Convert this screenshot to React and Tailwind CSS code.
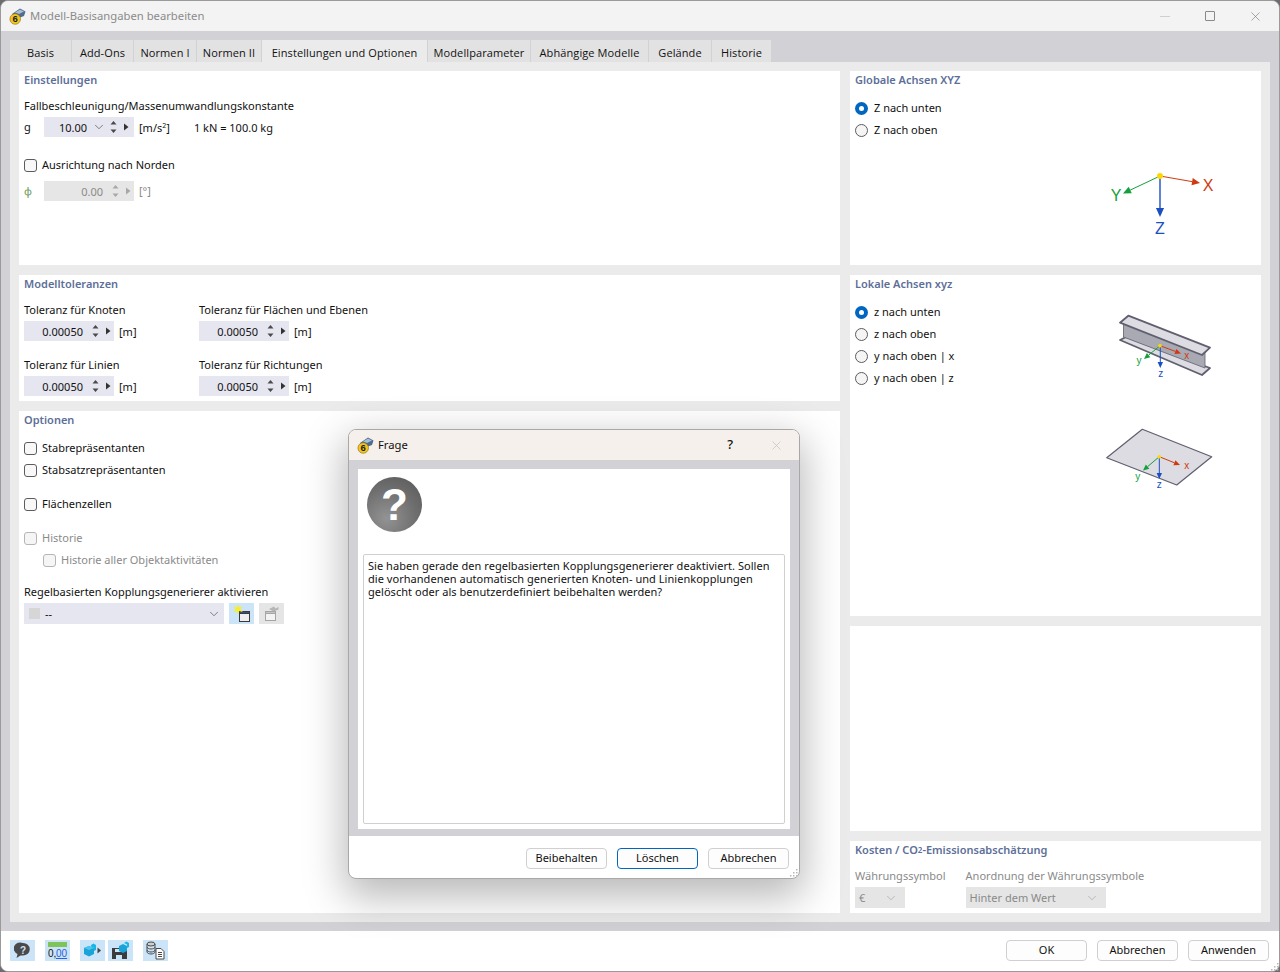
import { ChevronDown, X } from "lucide-react";

const TABS = [
  { label: "Basis", w: "w-[62px]" },
  { label: "Add-Ons", w: "w-[62px]" },
  { label: "Normen I", w: "w-[63px]" },
  { label: "Normen II", w: "w-[65px]" },
  { label: "Einstellungen und Optionen", w: "w-[166px]", active: true },
  { label: "Modellparameter", w: "w-[103px]" },
  { label: "Abhängige Modelle", w: "w-[118px]" },
  { label: "Gelände", w: "w-[63px]" },
  { label: "Historie", w: "w-[60px]" },
];

function AppIcon() {
  return (
    <svg width="17" height="17" viewBox="0 0 17 17" className="shrink-0">
      <path d="M3 6l8-5.5 5.5 3-1.5 4.5-8 3z" fill="#4f6b8f" />
      <path d="M6 4.5l5-3 4 2-5 2.5z" fill="#a9bdd3" />
      <circle cx="6.2" cy="11" r="5.3" fill="#f2c521" stroke="#8a6d10" strokeWidth="0.6" />
      <text x="6.2" y="14.4" textAnchor="middle" fontSize="9.5" fontWeight="700" fill="#1c1c1c" fontFamily="Liberation Sans, sans-serif">6</text>
    </svg>
  );
}

function SpinArrows({ disabled }) {
  const c = disabled ? "#a8a8a8" : "#4a4a4a";
  return (
    <svg width="26" height="14" viewBox="0 0 26 14" className="shrink-0">
      <path d="M7.5 1L4.5 4.5h6zM7.5 13L4.5 9.5h6z" fill={c} />
      <path d="M18 3.5l4.5 3.5-4.5 3.5z" fill={disabled ? "#a8a8a8" : "#333"} />
    </svg>
  );
}

function Spinner({ value, dropdown, disabled }) {
  return (
    <div className={`flex items-center w-[90px] h-5 ${disabled ? "bg-[#e6e6e6] text-[#8a8a8a]" : "bg-[#e6e6f0]"}`}>
      <span className={`text-right pt-[2px] ${dropdown ? "w-[43px]" : "w-[59px]"}`}>{value}</span>
      {dropdown && <ChevronDown size={14} strokeWidth={1.25} className="ml-[5px] shrink-0 text-[#555]" />}
      {!dropdown && <span className="w-[5px]" />}
      <SpinArrows disabled={disabled} />
    </div>
  );
}

function Check({ label, disabled, className = "" }) {
  return (
    <div className={`flex items-center h-[18px] ${className}`}>
      <span className={`w-[13px] h-[13px] rounded-[3px] border shrink-0 ${disabled ? "border-[#b5b5b5] bg-[#f5f5f5]" : "border-[#5c5c5c] bg-[#f8f8f8]"}`} />
      <span className={`ml-[5px] ${disabled ? "text-[#8a8a8a]" : ""}`}>{label}</span>
    </div>
  );
}

function Radio({ label, checked }) {
  return (
    <div className="flex items-center h-[22px]">
      {checked ? (
        <span className="w-[13px] h-[13px] rounded-full bg-[#0067c0] flex items-center justify-center shrink-0">
          <span className="w-[5px] h-[5px] rounded-full bg-white" />
        </span>
      ) : (
        <span className="w-[13px] h-[13px] rounded-full border border-[#5c5c5c] bg-[#f5f5f5] shrink-0" />
      )}
      <span className="ml-[6px]">{label}</span>
    </div>
  );
}

function Title({ children }) {
  return <div className="h-[18px] flex items-center font-semibold text-[#5d6f99]">{children}</div>;
}

function Panel({ className = "", children }) {
  return <section className={`bg-white px-[5px] ${className}`}>{children}</section>;
}

function Tolerance({ label, className = "" }) {
  return (
    <div className={className}>
      <div className="h-[18px] flex items-center">{label}</div>
      <div className="mt-[2px] flex items-center">
        <Spinner value="0.00050" />
        <span className="ml-[5px] pt-[2px]">[m]</span>
      </div>
    </div>
  );
}

function Btn({ children, primary }) {
  return (
    <button className={`w-[81px] h-[21px] pt-[1px] rounded-[4px] border bg-[#fdfdfd] flex items-center justify-center ${primary ? "border-[#0067c0]" : "border-[#d0d0d0]"}`}>
      {children}
    </button>
  );
}

function ToolBtn({ children }) {
  return <div className="w-[25px] h-[21px] bg-[#cce4f7] flex items-center justify-center shrink-0">{children}</div>;
}

function Grip({ className }) {
  return (
    <svg width="9" height="9" viewBox="0 0 9 9" className={className}>
      <path d="M7 1h1.5v1.5H7zM4 4h1.5v1.5H4zM7 4h1.5v1.5H7zM1 7h1.5v1.5H1zM4 7h1.5v1.5H4zM7 7h1.5v1.5H7z" fill="#b9b9b9" />
    </svg>
  );
}

function Arrow({ x1, y1, x2, y2, color, head = 6, width = 1 }) {
  const a = Math.atan2(y2 - y1, x2 - x1);
  const px = Math.sin(a) * head * 0.45;
  const py = Math.cos(a) * head * 0.45;
  const bx = x2 - Math.cos(a) * head;
  const by = y2 - Math.sin(a) * head;
  return (
    <g>
      <line x1={x1} y1={y1} x2={bx} y2={by} stroke={color} strokeWidth={width} />
      <path d={`M${x2} ${y2}L${bx + px} ${by - py}L${bx - px} ${by + py}z`} fill={color} />
    </g>
  );
}

function GlobalAxes() {
  return (
    <svg width="120" height="70" viewBox="0 0 120 70" className="shrink-0 mt-[81px] mr-[36px]" fontFamily="Liberation Sans, sans-serif" fontSize="16">
      <Arrow x1={60} y1={6} x2={100} y2={13} color="#cf3a10" head={8} />
      <Arrow x1={60} y1={6} x2={23} y2={23.5} color="#14a03c" head={8} />
      <Arrow x1={60} y1={6} x2={60} y2={47} color="#1a4fc4" head={9} width={1.4} />
      <circle cx="60" cy="6" r="3" fill="#ffd800" />
      <text x="108" y="20.5" textAnchor="middle" fill="#cf3a10">X</text>
      <text x="16" y="31" textAnchor="middle" fill="#14a03c">Y</text>
      <text x="60" y="63.5" textAnchor="middle" fill="#1a4fc4">Z</text>
    </svg>
  );
}

function LocalAxes() {
  return (
    <svg width="120" height="185" viewBox="0 0 120 185" className="shrink-0 mt-[17px] mr-[36px]" fontFamily="Liberation Sans, sans-serif" fontSize="10">
      {/* I-Profil */}
      <path d="M20 30L26 27L110 58L102 65z" fill="#dcdce2" stroke="#5f5f6f" strokeWidth="1.8" strokeLinejoin="round" />
      <path d="M23.5 11L23.5 27L105 58L105 42z" fill="#a9a9b4" stroke="#5f5f6f" strokeWidth="0.8" />
      <path d="M28.3 5.7L110 37.7L102 45L20 12.7z" fill="#dcdce2" stroke="#5f5f6f" strokeWidth="1.8" strokeLinejoin="round" />
      <Arrow x1={60} y1={35.7} x2={81} y2={43.5} color="#cf3a10" head={6} />
      <Arrow x1={60} y1={35.7} x2={44} y2={49} color="#14a03c" head={6} />
      <Arrow x1={60.3} y1={35.7} x2={60.3} y2={58} color="#1a4fc4" head={6} />
      <circle cx="60" cy="35.7" r="1.8" fill="#ffd800" />
      <text x="86.7" y="49" textAnchor="middle" fill="#cf3a10">x</text>
      <text x="39" y="54" textAnchor="middle" fill="#14a03c">y</text>
      <text x="60.7" y="67" textAnchor="middle" fill="#1a4fc4">z</text>
      {/* Platte */}
      <path d="M42.3 119.3L111.7 146.7L76.7 175L6.7 147.7z" fill="#dcdce2" stroke="#5f5f6f" strokeWidth="1.2" strokeLinejoin="round" />
      <Arrow x1={59.3} y1={146.7} x2={80} y2={155} color="#cf3a10" head={6} />
      <Arrow x1={59.3} y1={146.7} x2={43} y2={160.5} color="#14a03c" head={6} />
      <Arrow x1={59.3} y1={146.7} x2={59.3} y2={169} color="#1a4fc4" head={6} />
      <circle cx="59.3" cy="146.7" r="1.8" fill="#ffd800" />
      <text x="86.7" y="159" textAnchor="middle" fill="#cf3a10">x</text>
      <text x="37.7" y="170" textAnchor="middle" fill="#14a03c">y</text>
      <text x="59.3" y="177.5" textAnchor="middle" fill="#1a4fc4">z</text>
    </svg>
  );
}

function DisabledSelect({ value, className }) {
  return (
    <div className={`h-[21px] bg-[#e5e5e5] text-[#8a8a8a] flex items-center justify-between pl-[4px] pr-[7px] ${className}`}>
      <span className="pt-[1px]">{value}</span>
      <ChevronDown size={14} strokeWidth={1} className="text-[#999]" />
    </div>
  );
}

function QuestionDialog() {
  return (
    <div className="absolute left-[348px] top-[429px] w-[452px] h-[450px] rounded-lg border border-[#a8a8a8] bg-white flex flex-col overflow-hidden shadow-[0_14px_40px_4px_rgba(0,0,0,0.28)]">
      <div className="h-[30px] shrink-0 bg-[#f5f0eb] flex items-center pl-[8px]">
        <AppIcon />
        <span className="ml-[4px] text-[11.25px]">Frage</span>
        <span className="ml-auto text-[13px] font-medium">?</span>
        <X size={15} strokeWidth={1} className="ml-[36px] mr-[15px] text-[#bbbbbb]" />
      </div>
      <div className="h-[376px] shrink-0 bg-[#d2d2d6] p-[9px] pb-[7px]">
        <div className="bg-white h-full px-[5px] pb-[5px] flex flex-col">
          <div className="h-[85px] shrink-0 pt-[8px] pl-[4px]">
            <div className="w-[55px] h-[55px] rounded-full bg-[radial-gradient(circle_at_35%_75%,#939393_0%,#6e6e6e_55%,#565656_100%)] flex items-center justify-center text-white text-[44px] font-bold leading-none font-['Liberation_Sans',sans-serif]">
              ?
            </div>
          </div>
          <div className="flex-1 border border-[#d0d0d0] rounded-[2px] px-[4px] pt-[4px] leading-[13px] text-[#111] tracking-[0.04px]">
            Sie haben gerade den regelbasierten Kopplungsgenerierer deaktiviert. Sollen<br />
            die vorhandenen automatisch generierten Knoten- und Linienkopplungen<br />
            gelöscht oder als benutzerdefiniert beibehalten werden?
          </div>
        </div>
      </div>
      <div className="flex-1 flex items-center justify-end gap-[10px] pr-[10px] pt-[2px]">
        <Btn>Beibehalten</Btn>
        <Btn primary>Löschen</Btn>
        <Btn>Abbrechen</Btn>
      </div>
      <Grip className="absolute right-[1px] bottom-[1px]" />
    </div>
  );
}

export default function App() {
  return (
    <div className="relative w-[1280px] h-[972px] overflow-hidden bg-[#6b6b70] text-[11px] text-[#111] font-['Noto_Sans','Open_Sans',sans-serif]">
      <div className="h-full flex flex-col rounded-lg border border-[#9a9a9a] overflow-hidden bg-[#d2d2d6]">
        {/* Titelleiste */}
        <header className="h-[30px] shrink-0 bg-[#f3f3f3] flex items-center pl-[8px]">
          <AppIcon />
          <span className="ml-[4px] pt-[1px] text-[11.25px] text-[#8b8b8b]">Modell-Basisangaben bearbeiten</span>
          <span className="ml-auto w-[10px] h-[1px] bg-[#cfcfcf]" />
          <span className="ml-[35px] w-[10px] h-[10px] rounded-[1px] border border-[#888]" />
          <X size={15} strokeWidth={1} className="ml-[33px] mr-[16px] text-[#777]" />
        </header>

        {/* Karteireiter */}
        <nav className="mt-[9px] ml-[9px] h-[22px] shrink-0 flex tracking-[0.1px] font-['Open_Sans',sans-serif]">
          {TABS.map((t) => (
            <div key={t.label} className={`${t.w} flex items-center justify-center pt-[4px] border-r border-[#d2d2d6] ${t.active ? "bg-[#ebebeb]" : "bg-[#e2e2e3]"}`}>
              {t.label}
            </div>
          ))}
        </nav>

        {/* Inhalt */}
        <main className="mx-[9px] h-[860px] shrink-0 bg-[#ebebeb] p-[9px] flex gap-[10px]">
          <div className="w-[821px] shrink-0 flex flex-col gap-[10px]">
            <Panel className="h-[194px] shrink-0">
              <Title>Einstellungen</Title>
              <div className="mt-[8px] h-[18px] flex items-center">Fallbeschleunigung/Massenumwandlungskonstante</div>
              <div className="mt-[2px] flex items-center">
                <span className="w-[20px]">g</span>
                <Spinner value="10.00" dropdown />
                <span className="ml-[5px] pt-[2px]">[m/s<sup className="text-[7px]">2</sup>]</span>
                <span className="ml-[24px] pt-[2px]">1 kN = 100.0 kg</span>
              </div>
              <Check label="Ausrichtung nach Norden" className="mt-[19px]" />
              <div className="mt-[7px] flex items-center">
                <span className="w-[20px] text-[#6d9a5a]">ϕ</span>
                <Spinner value="0.00" disabled />
                <span className="ml-[5px] text-[#8a8a8a]">[°]</span>
              </div>
            </Panel>

            <Panel className="h-[126px] shrink-0">
              <Title>Modelltoleranzen</Title>
              <div className="mt-[8px] grid grid-cols-[175px_1fr] gap-y-[15px]">
                <Tolerance label="Toleranz für Knoten" />
                <Tolerance label="Toleranz für Flächen und Ebenen" />
                <Tolerance label="Toleranz für Linien" />
                <Tolerance label="Toleranz für Richtungen" />
              </div>
            </Panel>

            <Panel className="flex-1">
              <Title>Optionen</Title>
              <Check label="Stabrepräsentanten" className="mt-[10px]" />
              <Check label="Stabsatzrepräsentanten" className="mt-[4px]" />
              <Check label="Flächenzellen" className="mt-[16px]" />
              <Check label="Historie" disabled className="mt-[16px]" />
              <Check label="Historie aller Objektaktivitäten" disabled className="mt-[4px] ml-[19px]" />
              <div className="mt-[14px] h-[18px] flex items-center">Regelbasierten Kopplungsgenerierer aktivieren</div>
              <div className="mt-[2px] flex items-center">
                <div className="w-[200px] h-[21px] bg-[#e6e6f0] flex items-center pl-[5px] pr-[2px]">
                  <span className="w-[11px] h-[11px] bg-[#d6d6d6]" />
                  <span className="ml-[5px] pt-[1px]">--</span>
                  <ChevronDown size={14} strokeWidth={1.25} className="ml-auto mr-[1px] text-[#555]" />
                </div>
                <div className="ml-[5px] w-[25px] h-[21px] bg-[#cce4f7] flex items-center justify-center">
                  <svg width="19" height="19" viewBox="0 0 19 19">
                    <rect x="7.5" y="7.5" width="10" height="10" fill="#efefef" stroke="#3a3a3a" />
                    <rect x="7.5" y="7.5" width="10" height="2" fill="#3d4f7c" stroke="#3a3a3a" />
                    <path d="M6 0l1.2 3.4 3.6-1-2.4 2.8 2.4 2.8-3.6-1L6 10.4 4.8 7 1.2 8l2.4-2.8L1.2 2.4l3.6 1z" fill="#f6ee2c" />
                  </svg>
                </div>
                <div className="ml-[5px] w-[25px] h-[21px] bg-[#e5e5e5] flex items-center justify-center">
                  <svg width="17" height="17" viewBox="0 0 17 17">
                    <rect x="2.5" y="6.5" width="10" height="9" fill="#f3f3f3" stroke="#a5a5a5" />
                    <rect x="2.5" y="6.5" width="10" height="2" fill="#c4c4c4" stroke="#a5a5a5" />
                    <path d="M6 4l5-2.5 1.5 2 3-1.5v2.5l-5 2z" fill="#b5b5b5" />
                  </svg>
                </div>
              </div>
            </Panel>
          </div>

          <div className="w-[411px] shrink-0 flex flex-col gap-[10px]">
            <Panel className="h-[194px] shrink-0">
              <Title>Globale Achsen XYZ</Title>
              <div className="flex justify-between">
                <div className="mt-[8px]">
                  <Radio label="Z nach unten" checked />
                  <Radio label="Z nach oben" />
                </div>
                <GlobalAxes />
              </div>
            </Panel>
            <Panel className="h-[341px] shrink-0">
              <Title>Lokale Achsen xyz</Title>
              <div className="flex justify-between">
                <div className="mt-[8px]">
                  <Radio label="z nach unten" checked />
                  <Radio label="z nach oben" />
                  <Radio label="y nach oben | x" />
                  <Radio label="y nach oben | z" />
                </div>
                <LocalAxes />
              </div>
            </Panel>
            <Panel className="h-[205px] shrink-0" />
            <Panel className="flex-1">
              <Title>Kosten / CO<sub className="text-[8px] bottom-0">2</sub>-Emissionsabschätzung</Title>
              <div className="mt-[8px] flex gap-[10px]">
                <div>
                  <div className="h-[18px] flex items-center text-[#8a8a8a]">Währungssymbol</div>
                  <DisabledSelect value="€" className="w-[50px] mt-[2px]" />
                </div>
                <div className="ml-[10px]">
                  <div className="h-[18px] flex items-center text-[#8a8a8a]">Anordnung der Währungssymbole</div>
                  <DisabledSelect value="Hinter dem Wert" className="w-[140px] mt-[2px]" />
                </div>
              </div>
            </Panel>
          </div>
        </main>

        {/* Fussleiste */}
        <footer className="mt-[9px] flex-1 bg-white flex items-center pl-[9px] pr-[10px] pb-[2px]">
          <ToolBtn>
            <svg width="17" height="17" viewBox="0 0 17 17">
              <path d="M9 1a6.5 6 0 0 1 0 12.5H6.5L2.5 16l1-4A6.5 6 0 0 1 9 1z" fill="#4a4a4a" />
              <text x="9" y="11.5" textAnchor="middle" fontSize="10" fontWeight="700" fill="#cce4f7" fontFamily="Liberation Sans, sans-serif">?</text>
            </svg>
          </ToolBtn>
          <div className="ml-[10px]">
            <ToolBtn>
              <svg width="21" height="19" viewBox="0 0 21 19">
                <rect x="1" y="1" width="19" height="5" fill="#7fc35a" />
                <text x="1" y="16" fontSize="10" fill="#111" fontFamily="Liberation Sans, sans-serif">0,</text>
                <text x="9" y="16" fontSize="10" fill="#2a62d8" textDecoration="underline" fontFamily="Liberation Sans, sans-serif">00</text>
              </svg>
            </ToolBtn>
          </div>
          <div className="ml-[10px]">
            <ToolBtn>
              <svg width="19" height="17" viewBox="0 0 19 17">
                <path d="M1 6l5-2 5 2v6l-5 2.5-5-2.5z" fill="#1aa3d9" />
                <path d="M1 6l5 2 5-2-5-2z" fill="#4cc4ec" />
                <path d="M8 3l2.5-1.5L13 3v5l-2 1V6L8 4.5z" fill="#17b6e6" />
                <path d="M14.5 5.5l3.5 3-3.5 3z" fill="#444" />
              </svg>
            </ToolBtn>
          </div>
          <div className="ml-[3px]">
            <ToolBtn>
              <svg width="19" height="19" viewBox="0 0 19 19">
                <path d="M1 7h12l3 3v8H1z" fill="#3c3c3c" />
                <rect x="4" y="8" width="7" height="3" fill="#cce4f7" />
                <rect x="5" y="14" width="6" height="4" fill="#cce4f7" />
                <path d="M8 5l4-2 4 2v5l-4 2-4-2z" fill="#1aa3d9" />
                <path d="M13 2l2.5-1.5L18 2v4l-2 1V3.5L14 2.5z" fill="#17b6e6" />
              </svg>
            </ToolBtn>
          </div>
          <div className="ml-[10px]">
            <ToolBtn>
              <svg width="21" height="19" viewBox="0 0 21 19" fill="none" stroke="#4a4a4a">
                <ellipse cx="6" cy="3" rx="4" ry="2" fill="#cfcfcf" />
                <path d="M2 3v8c0 1 2 2 4 2s4-1 4-2V3M2 6c0 1 2 2 4 2s4-1 4-2M2 9c0 1 2 2 4 2s4-1 4-2" />
                <path d="M11 7.5h5l3 3v7.5h-8z" fill="#fff" />
                <path d="M13 11.5h4M13 13.5h4M13 15.5h4" />
              </svg>
            </ToolBtn>
          </div>
          <div className="ml-auto flex gap-[10px]">
            <Btn>OK</Btn>
            <Btn>Abbrechen</Btn>
            <Btn>Anwenden</Btn>
          </div>
        </footer>
      </div>
      <Grip className="absolute right-[1px] bottom-[1px]" />
      <QuestionDialog />
    </div>
  );
}
